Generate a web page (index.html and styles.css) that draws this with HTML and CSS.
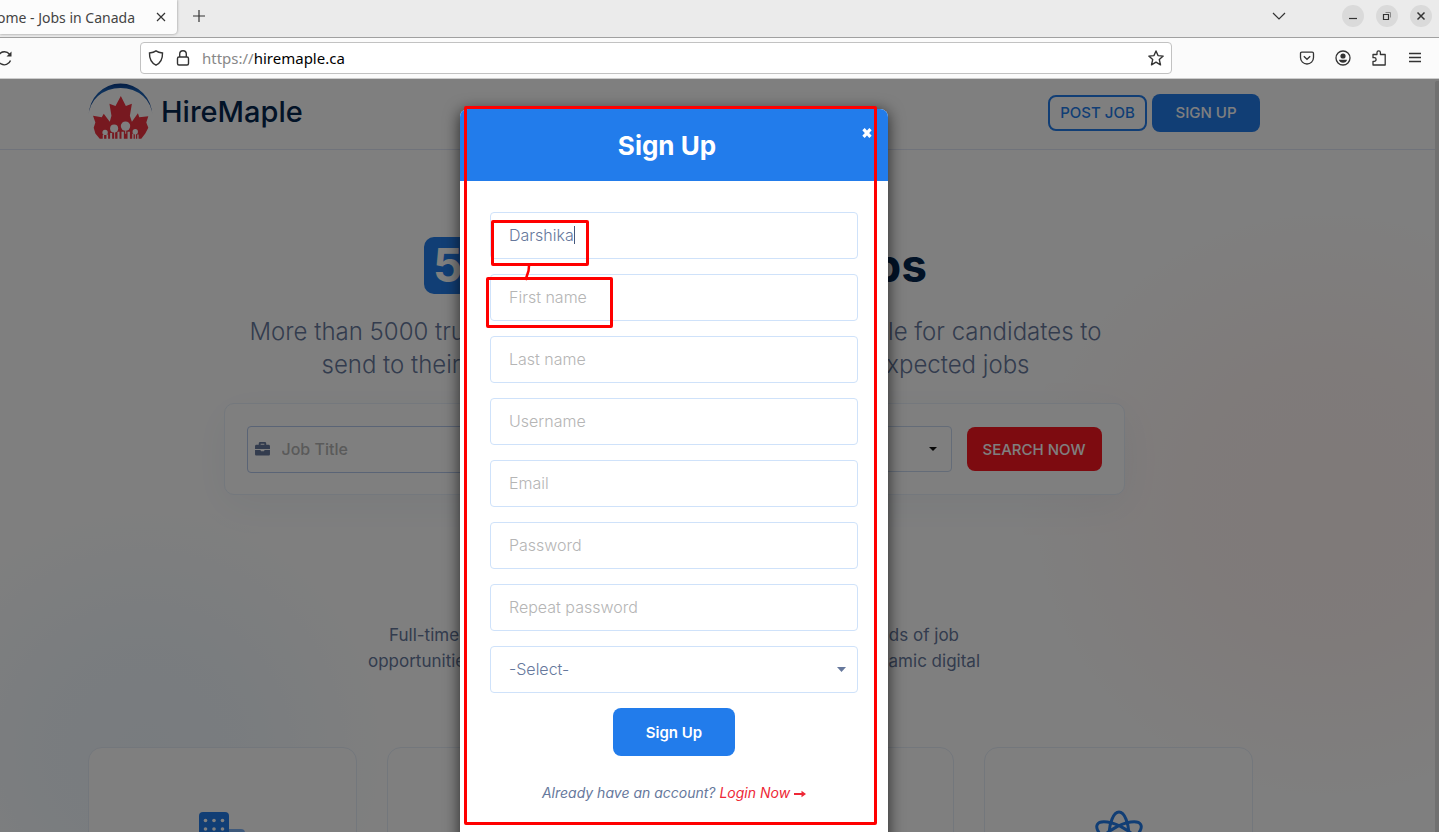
FILE: index.html
```html
<!DOCTYPE html>
<html lang="en">
<head>
<meta charset="utf-8">
<title>Home - Jobs in Canada</title>
<link rel="stylesheet" href="styles.css">
</head>
<body>
<div class="browser">
  <div class="tabbar">
    <div class="tab">
      <span class="tab-title">ome - Jobs in Canada</span>
      <button class="plain" aria-label="Close tab"><svg width="10" height="10" viewBox="0 0 10 10"><path d="M1 1l8 8M9 1l-8 8"/></svg></button>
    </div>
    <button class="plain new-tab" aria-label="New tab"><svg width="14" height="14" viewBox="0 0 14 14"><path d="M7 1v12M1 7h12"/></svg></button>
    <button class="plain tab-list" aria-label="List all tabs"><svg width="14" height="8" viewBox="0 0 14 8"><path d="M1 1l6 6 6-6"/></svg></button>
    <div class="window-controls">
      <button class="round" aria-label="Minimize"><svg width="10" height="10" viewBox="0 0 10 10"><path d="M1 7.500h8"/></svg></button>
      <button class="round" aria-label="Restore"><svg width="10" height="10" viewBox="0 0 10 10"><path d="M1.500 3.500h5v5h-5z"/><path d="M3.500 1.500h5v5" stroke="#888" stroke-width="1"/></svg></button>
      <button class="round" aria-label="Close"><svg width="10" height="10" viewBox="0 0 10 10"><path d="M1.500 1.500l7 7M8.500 1.500l-7 7" stroke-width="1.500"/></svg></button>
    </div>
  </div>
  <div class="toolbar">
    <button class="plain reload" aria-label="Reload"><svg width="20" height="16" viewBox="0 0 20 16"><path d="M17.500 10.500A6.500 6.500 0 1 1 16.500 4.300" stroke-width="1.400"/><path d="M18.500 1.500v5h-5z" fill="#333" stroke="none"/></svg></button>
    <div class="urlbar">
      <svg width="16" height="16" viewBox="0 0 16 16"><path d="M8 .9C6.300 2.200 4 2.800 1.500 3c-.2 5.500 1.500 9.700 6.500 12.200C13 12.700 14.700 8.500 14.500 3 12 2.800 9.700 2.200 8 .9z" stroke-width="1.400"/></svg>
      <svg width="16" height="16" viewBox="0 0 16 16"><rect x="2.500" y="7" width="11" height="8" rx="1.500" stroke-width="1.400"/><path d="M4.700 7V4a3.300 3.300 0 0 1 6.600 0v3" stroke-width="1.400"/></svg>
      <span class="url"><span class="scheme">https://</span>hiremaple.ca</span>
      <button class="plain" aria-label="Bookmark"><svg width="16" height="16" viewBox="0 0 16 16"><path d="M8 .9l2 4.700 5.200.5-3.900 3.500 1.200 5.200L8 12.100l-4.500 2.700 1.200-5.200L.8 6.100 6 5.600z" stroke-width="1.400" stroke-linejoin="round"/></svg></button>
    </div>
    <div class="tools">
      <button class="plain" aria-label="Pocket"><svg width="16" height="16" viewBox="0 0 16 16"><path d="M2.800 2.200h10.400c.8 0 1.300.5 1.300 1.300V7.500a6.500 6.500 0 0 1-13 0V3.500c0-.8.5-1.300 1.300-1.300z" stroke-width="1.300"/><path d="M4.800 6.200L8 9.300l3.200-3.100" stroke-width="1.300"/></svg></button>
      <button class="plain" aria-label="Account"><svg width="16" height="16" viewBox="0 0 16 16"><circle cx="8" cy="8" r="7" stroke-width="1.300"/><circle cx="8" cy="6" r="2.600" fill="#333" stroke="none"/><path d="M3.900 9.700h8.200c-.4 2-2 3-4.100 3s-3.700-1-4.100-3z" fill="#333" stroke="none"/></svg></button>
      <button class="plain" aria-label="Extensions"><svg width="16" height="16" viewBox="0 0 16 16"><path d="M2 15V11.300h1.300a1.800 1.800 0 0 0 0-3.600H2V4.500h4V2.600a1.700 1.700 0 0 1 3.400 0v1.900h4.800V15z" stroke-width="1.300" stroke-linejoin="round"/></svg></button>
      <button class="plain" aria-label="Menu"><svg width="16" height="16" viewBox="0 0 16 16"><path d="M2 3.500h12M2 7.500h12M2 11.500h12" stroke-width="1.400"/></svg></button>
    </div>
  </div>

  <div class="viewport">
    <div class="page">
      <header class="site-header">
        <div class="header-inner">
          <a class="logo" href="#">
            <svg width="65" height="58" viewBox="266 246 194 172">
              <defs><linearGradient id="arc" x1="0" x2="0" y1="0" y2="1"><stop offset="0" stop-color="#0a3a86"/><stop offset=".25" stop-color="#1c64b8"/><stop offset="1" stop-color="#103f8c"/></linearGradient></defs>
              <path d="M268 347A95 97 0 0 1 458 347A95 84 0 0 0 268 347z" fill="url(#arc)"/>
              <path d="M364 287L379 317 397 310 391 346 397 364 415 339 419 351 446 348 440 366 446 382 437 399 425 415H301L288 399 283 382 288 366 281 346 307 351 313 340 331 364 336 346 330 310 348 317z" fill="#ef3340"/>
              <g fill="#fff"><circle cx="317" cy="396" r="8"/><circle cx="344" cy="384" r="12"/><circle cx="378" cy="377" r="14"/><circle cx="407" cy="394" r="8"/>
              <path d="M310 404h4v14h-4zM321 402h5v16h-5zM332 398h6v20h-6zM344 394h3v24h-3zM354 394h6v24h-6zM366 394h7v24h-7zM377 390h3v10h-3zM384 394h7v24h-7zM398 400h4v18h-4zM406 401h3v17h-3zM413 402h4v16h-4z"/></g>
            </svg>
            <span>HireMaple</span>
          </a>
          <nav class="actions">
            <a class="btn btn-outline" href="#">POST JOB</a>
            <a class="btn btn-solid" href="#">SIGN UP</a>
          </nav>
        </div>
      </header>

      <main>
        <section class="hero">
          <div class="hero-text">
            <h1><span class="badge">5000+</span><span>Jobs</span></h1>
            <div class="lead">
              <p class="lead-first"><span>More than 5000 trusted</span><span>available for candidates to</span></p>
              <p class="lead-second"><span>send to their</span><span>expected jobs</span></p>
            </div>
          </div>
          <form class="search">
            <div class="job-field">
              <svg width="15" height="14" viewBox="0 0 512 480"><path fill="#66789c" d="M464 96H384V48c0-27-21-48-48-48H176c-27 0-48 21-48 48v48H48C21 96 0 117 0 144v96h512v-96c0-27-21-48-48-48zm-144 0H192V64h128zM320 304c0 9-7 16-16 16h-96c-9 0-16-7-16-16v-32H0v144c0 27 21 48 48 48h416c27 0 48-21 48-48V272H320z"/></svg>
              <input type="text" placeholder="Job Title" aria-label="Job Title">
            </div>
            <button class="place" type="button" aria-label="Location"><svg width="8" height="4" viewBox="0 0 8 4"><path d="M0 0h8L4 4z" fill="#111"/></svg></button>
            <button class="search-btn" type="button">SEARCH NOW</button>
          </form>
        </section>

        <section class="intro">
          <p class="intro-first"><span>Full-time</span><span>kinds of job</span></p>
          <p class="intro-second"><span>opportunities</span><span>dynamic digital</span></p>
        </section>

        <section class="cards-section">
          <div class="cards">
            <article class="card"><svg width="46" height="60" viewBox="0 0 46 60"><rect x="20" y="17" width="26" height="43" rx="4" fill="#7db3f7"/><rect x="0" y="0" width="30" height="60" rx="4" fill="#227ceb"/><g fill="#fff"><circle cx="6.500" cy="8.500" r="1.800"/><circle cx="15" cy="8.500" r="1.800"/><circle cx="23.500" cy="8.500" r="1.800"/><circle cx="6.500" cy="17" r="1.800"/><circle cx="15" cy="17" r="1.800"/><circle cx="23.500" cy="17" r="1.800"/></g></svg></article>
            <article class="card"></article>
            <article class="card"></article>
            <article class="card"><svg width="50" height="60" viewBox="0 0 50 60"><g fill="none" stroke="#227ceb" stroke-width="3"><ellipse cx="25" cy="25" rx="10" ry="25"/><ellipse cx="25" cy="25" rx="10" ry="25" transform="rotate(60 25 25)"/><ellipse cx="25" cy="25" rx="10" ry="25" transform="rotate(-60 25 25)"/></g></svg></article>
          </div>
        </section>
      </main>
    </div>
    <div class="backdrop"></div>
    <div class="scrollbar"></div>

    <div class="dialog-layer">
      <div class="dialog" role="dialog" aria-labelledby="dialog-title">
        <div class="dialog-head">
          <h2 id="dialog-title">Sign Up</h2>
          <button class="dialog-close" type="button" aria-label="Close"><svg width="10" height="10" viewBox="0 0 10 10"><path d="M1.500 1.200l7 7.600M8.500 1.200L1.500 8.800" stroke="#fff" stroke-width="3.200"/></svg></button>
        </div>
        <form class="dialog-body">
          <div class="control typing"><input type="text" value="Darshika" aria-label="Company name" size="8"><span class="caret"></span></div>
          <input class="control" type="text" placeholder="First name" aria-label="First name">
          <input class="control" type="text" placeholder="Last name" aria-label="Last name">
          <input class="control" type="text" placeholder="Username" aria-label="Username">
          <input class="control" type="email" placeholder="Email" aria-label="Email">
          <input class="control" type="password" placeholder="Password" aria-label="Password">
          <input class="control" type="password" placeholder="Repeat password" aria-label="Repeat password">
          <div class="select-wrap">
            <select class="control" aria-label="Account type"><option>-Select-</option></select>
            <svg class="select-arrow" width="9" height="5" viewBox="0 0 9 5"><path d="M0 0h9L4.500 5z" fill="#66789c"/></svg>
          </div>
          <button class="submit" type="button">Sign Up</button>
          <p class="login">Already have an account? <a href="#">Login Now <svg width="12" height="8" viewBox="0 0 12 8"><path d="M0 3h7.500V.8L12 4 7.500 7.200V5H0z" fill="#ee2736"/></svg></a></p>
        </form>
        <div class="mark mark-dialog"></div>
        <div class="mark mark-value"></div>
        <div class="mark mark-first"></div>
        <svg class="mark-link" width="8" height="16" viewBox="0 0 8 16"><path d="M5 0L4.500 5 1.500 14" fill="none" stroke="#f00" stroke-width="2.500"/></svg>
      </div>
    </div>
  </div>
</div>
</body>
</html>
```
FILE: styles.css
```css
* { box-sizing: border-box; }
body {
  margin: 0;
  font-family: Inter, "Open Sans", sans-serif;
  color: #66789c;
}
h1, h2, p { margin: 0; }
a { text-decoration: none; color: inherit; }
input, select, button { font: inherit; }
button { cursor: pointer; }

.browser {
  height: 100vh;
  display: flex;
  flex-direction: column;
  overflow: hidden;
}
.plain {
  display: flex;
  padding: 0;
  border: 0;
  background: none;
}
.tabbar svg, .toolbar svg {
  fill: none;
  stroke: #333;
  stroke-width: 1.2;
  flex: none;
}

/* Tab strip */
.tabbar {
  height: 38px;
  flex: none;
  display: flex;
  align-items: center;
  padding: 0 7px 5px 0;
  background: #ebebeb;
  border-bottom: 1px solid #a0a0a0;
}
.tab {
  width: 177px;
  height: 34px;
  align-self: flex-start;
  display: flex;
  align-items: center;
  justify-content: flex-end;
  gap: 21px;
  padding-right: 11px;
  background: #fcfcfc;
  border-radius: 0 0 4px 0;
  box-shadow: 0 0 3px rgba(0, 0, 0, .4);
  font: 14px "Noto Sans", sans-serif;
  color: #444;
  white-space: nowrap;
}
.new-tab { margin-left: 15px; }
.tab-list { margin-left: auto; margin-right: 56px; }
.window-controls { display: flex; gap: 12px; }
.round {
  width: 22px;
  height: 22px;
  display: grid;
  place-items: center;
  padding: 0;
  border: 0;
  border-radius: 50%;
  background: #dadada;
}

/* Address bar */
.toolbar {
  height: 41px;
  flex: none;
  display: flex;
  align-items: center;
  padding-right: 16px;
  background: #fbfbfb;
  border-bottom: 1px solid #ccc;
}
.reload { width: 140px; margin-left: -7px; margin-right: 7px; }
.urlbar {
  flex: 1;
  height: 32px;
  display: flex;
  align-items: center;
  gap: 11px;
  padding: 0 7px;
  margin-right: 127px;
  background: #fff;
  border: 1px solid #c2c2c2;
  border-radius: 4px;
}
.url {
  flex: 1;
  font: 15px "Noto Sans", sans-serif;
  color: #000;
}
.scheme { color: #888; }
.tools { display: flex; gap: 20px; }

/* Site */
.viewport {
  position: relative;
  flex: 1;
  overflow: hidden;
}
.page {
  min-height: 100%;
  padding-right: 91px;
  background:
    radial-gradient(circle at 145px 670px, rgba(60, 160, 240, .07), rgba(60, 160, 240, .06) 100px, rgba(60, 160, 240, 0) 250px),
    radial-gradient(circle at 1325px 425px, rgba(255, 70, 40, .06), rgba(255, 70, 40, .05) 130px, rgba(255, 70, 40, 0) 310px),
    #fff;
}
.site-header {
  height: 71px;
  margin-right: -91px;
  padding-right: 91px;
  border-bottom: 1px solid #e0e6f7;
}
.header-inner {
  max-width: 1172px;
  margin: 0 auto;
  display: flex;
  align-items: flex-start;
  justify-content: space-between;
}
.logo {
  display: flex;
  align-items: center;
  gap: 8px;
  padding-top: 3px;
  font-size: 29px;
  font-weight: 500;
  color: #05264e;
}
.actions { display: flex; align-items: center; gap: 5px; padding-top: 15px; }
.btn {
  font-size: 15px;
  font-weight: 500;
  line-height: 20px;
  border-radius: 8px;
  text-align: center;
  white-space: nowrap;
}
.btn-outline { width: 99px; padding: 6px 0; border: 2px solid #227ceb; color: #227ceb; }
.btn-solid { width: 108px; padding: 9px 0; background: #227ceb; color: #fff; }

.hero { padding-top: 87px; }
.hero-text { padding-left: 3px; }
h1, .lead p, .intro p {
  display: flex;
  justify-content: space-between;
  margin: 0 auto;
}
h1 {
  max-width: 503px;
  align-items: center;
  font-size: 46px;
  line-height: 57px;
  color: #05264e;
}
.badge {
  padding: 0 9px;
  border-radius: 10px;
  background: #227ceb;
  color: #fff;
}
.lead {
  margin-top: 21px;
  font-size: 24px;
  font-weight: 300;
  line-height: 33px;
}
.lead-first { max-width: 852px; }
.lead-second { max-width: 708px; }
.search {
  max-width: 901px;
  height: 92px;
  margin: 22px auto 0;
  display: flex;
  align-items: center;
  padding: 0 22px;
  background: #fff;
  border: 1px solid #e8f0fb;
  border-radius: 10px;
  box-shadow: 0 10px 40px rgba(30, 80, 140, .06);
}
.job-field {
  flex: 1;
  height: 47px;
  display: flex;
  align-items: center;
  gap: 12px;
  padding: 0 7px;
  border: 1px solid #b4c8ec;
  border-radius: 4px;
}
.job-field input {
  flex: 1;
  border: 0;
  padding: 0;
  background: none;
  font-size: 16px;
  font-weight: 500;
}
.job-field input::placeholder { color: #b5b5b5; }
.place {
  flex: 1;
  height: 46px;
  display: flex;
  align-items: center;
  justify-content: flex-end;
  padding: 0 14px;
  background: none;
  border: 1px solid #c8d8f0;
  border-radius: 4px;
}
.search-btn {
  width: 135px;
  height: 44px;
  margin-left: 15px;
  padding: 0;
  border: 0;
  border-radius: 8px;
  background: #fb1620;
  color: #fff;
  font-size: 15px;
  font-weight: 500;
}
.intro {
  margin-top: 127px;
  font-size: 17px;
  line-height: 26px;
}
.intro-first { max-width: 570px; }
.intro-second { max-width: 612px; }
.cards-section { padding-right: 7px; }
.cards {
  max-width: 1165px;
  margin: 73px auto 0;
  display: grid;
  grid-template-columns: repeat(4, 1fr);
  gap: 30px;
}
.card {
  height: 200px;
  padding-top: 64px;
  text-align: center;
  background: #fff;
  border: 1px solid #e6eef9;
  border-radius: 14px;
}
.card svg { overflow: visible; }

.backdrop {
  position: absolute;
  inset: 0;
  background: rgba(0, 0, 0, .5);
}
.scrollbar {
  position: absolute;
  top: 2px;
  right: 0;
  bottom: 0;
  width: 4px;
  border-radius: 2px 0 0 0;
  background: #707070;
}

/* Sign-up dialog */
.dialog-layer {
  position: absolute;
  inset: 0;
  display: flex;
  justify-content: center;
  padding: 30px 91px 0 0;
}
.dialog {
  position: relative;
  width: 428px;
  height: 800px;
  background: #fff;
  border-radius: 8px;
  box-shadow: 0 2px 16px rgba(0, 0, 0, .7);
}
.dialog-head {
  height: 72px;
  display: flex;
  align-items: center;
  padding: 0 16px 0 12px;
  background: #227ceb;
  border-radius: 8px 8px 0 0;
  color: #fff;
}
.dialog-head h2 {
  flex: 1;
  text-align: center;
  font-size: 26px;
  font-weight: 700;
}
.dialog-close {
  display: flex;
  align-self: flex-start;
  margin-top: 19px;
  padding: 0;
  border: 0;
  background: none;
}
.dialog-body {
  display: flex;
  flex-direction: column;
  align-items: center;
  gap: 15px;
  padding: 31px 30px;
}
.control {
  width: 100%;
  height: 47px;
  padding: 0 18px 2px;
  border: 1px solid #cfe2fa;
  border-radius: 4px;
  background: #fff;
  color: #66789c;
  font-size: 16px;
  font-weight: 300;
  outline: none;
}
.control::placeholder { color: #b5b5b5; opacity: 1; }
.typing { display: flex; align-items: center; }
.typing input {
  field-sizing: content;
  border: 0;
  padding: 0;
  outline: none;
  color: inherit;
}
.caret { width: 1px; height: 18px; background: #46587c; }
.select-wrap { position: relative; width: 100%; display: flex; }
select.control { appearance: none; }
.select-arrow { position: absolute; right: 12px; top: 21px; }
.submit {
  width: 122px;
  height: 48px;
  border: 0;
  border-radius: 8px;
  background: #227ceb;
  color: #fff;
  font-size: 15px;
  font-weight: 600;
}
.login {
  padding-top: 12px;
  font-size: 14px;
  font-style: italic;
  line-height: 20px;
  white-space: nowrap;
}
.login a { color: #ee2736; }

/* Review marks drawn over the dialog */
.mark {
  position: absolute;
  border: 3px solid #f00;
  border-radius: 2px;
  pointer-events: none;
}
.mark-dialog { left: 4px; top: -3px; width: 413px; height: 719px; }
.mark-value { left: 31px; top: 111px; width: 98px; height: 46px; }
.mark-first { left: 26px; top: 168px; width: 127px; height: 51px; }
.mark-link { position: absolute; left: 64px; top: 157px; }
```
